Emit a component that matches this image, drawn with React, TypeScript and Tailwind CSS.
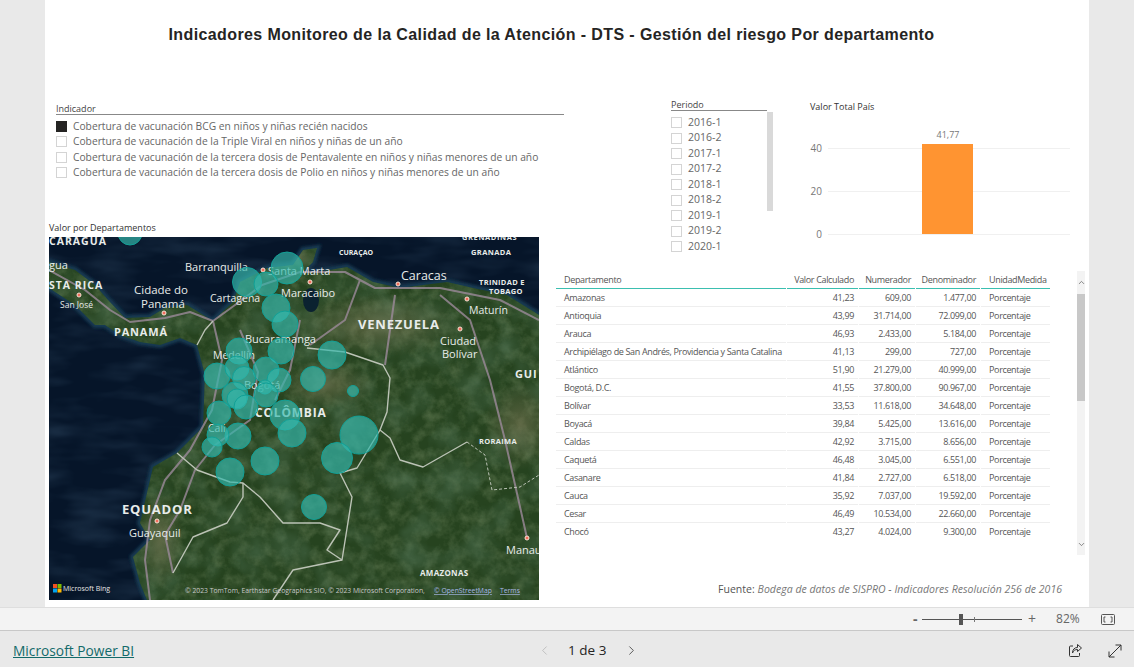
import { ChevronLeft, ChevronRight, ChevronUp, ChevronDown } from "lucide-react";

const indicadores = [
  "Cobertura de vacunación BCG en niños y niñas recién nacidos",
  "Cobertura de vacunación de la Triple Viral en niños y niñas de un año",
  "Cobertura de vacunación de la tercera dosis de Pentavalente en niños y niñas menores de un año",
  "Cobertura de vacunación de la tercera dosis de Polio en niños y niñas menores de un año",
];

const periodos = ["2016-1", "2016-2", "2017-1", "2017-2", "2018-1", "2018-2", "2019-1", "2019-2", "2020-1"];

const filas = [
  ["Amazonas", "41,23", "609,00", "1.477,00"],
  ["Antioquia", "43,99", "31.714,00", "72.099,00"],
  ["Arauca", "46,93", "2.433,00", "5.184,00"],
  ["Archipiélago de San Andrés, Providencia y Santa Catalina", "41,13", "299,00", "727,00"],
  ["Atlántico", "51,90", "21.279,00", "40.999,00"],
  ["Bogotá, D.C.", "41,55", "37.800,00", "90.967,00"],
  ["Bolívar", "33,53", "11.618,00", "34.648,00"],
  ["Boyacá", "39,84", "5.425,00", "13.616,00"],
  ["Caldas", "42,92", "3.715,00", "8.656,00"],
  ["Caquetá", "46,48", "3.045,00", "6.551,00"],
  ["Casanare", "41,84", "2.727,00", "6.518,00"],
  ["Cauca", "35,92", "7.037,00", "19.592,00"],
  ["Cesar", "46,49", "10.534,00", "22.660,00"],
  ["Chocó", "43,27", "4.024,00", "9.300,00"],
];

// x, y, r in page coordinates
const burbujas = [
  [130, 233, 12], [287, 268, 16], [247, 282, 14.5], [266, 284, 12], [276, 308, 14], [285, 324, 13],
  [281, 351, 13], [332, 355, 14], [239, 351, 13], [217, 376, 13], [237, 368, 12], [266, 370, 13],
  [244, 378, 11.5], [279, 380, 12], [313, 379, 12.5], [265, 387, 7], [353, 391, 5.5], [266, 395, 12],
  [235, 395, 13], [237, 399, 10], [246, 407, 12], [219, 413, 12], [285, 415, 15], [292, 433, 14],
  [359, 435, 19], [238, 436, 13], [218, 435, 11], [212, 447, 10], [337, 458, 15.5], [265, 461, 14],
  [230, 472, 14], [314, 507, 12.5],
];

const ciudades = [
  [263, 270], [398, 284], [79, 295], [164, 313], [310, 282], [467, 299], [460, 329], [157, 521], [527, 538],
];

const tierra =
  "M213 321 L233 302 L240 282 L267 268 L293 265 L303 250 L317 248 L313 262 L303 272 L318 272 L347 267 L373 282 L400 288 L447 282 L473 288 L507 295 L539 315 L539 600 L147 600 L140 583 L133 557 L150 540 L140 523 L147 493 L153 467 L177 453 L203 427 L205 375 L197 345 L180 338 L160 345 L140 342 L120 335 L105 325 L95 325 L75 305 L49 288 L49 262 L75 270 L95 285 L108 300 L125 318 L150 317 L165 308 L187 305 Z";

function MapaLabel({ x, y, size, bold, spacing, children }: { x: number; y: number; size: number; bold?: boolean; spacing?: number; children: string }) {
  return (
    <text x={x} y={y} fontSize={size} fontWeight={bold ? 700 : 400} letterSpacing={spacing ?? 0} fill="#e8ecea" fontFamily="'Open Sans', sans-serif">
      {children}
    </text>
  );
}

function Mapa() {
  return (
    <svg viewBox="49 237 490 363" className="block h-[363px] w-[490px]">
      <defs>
        <filter id="suave" x="-5%" y="-5%" width="110%" height="110%">
          <feGaussianBlur stdDeviation="1.6" />
        </filter>
        <filter id="ruido" x="0" y="0" width="100%" height="100%">
          <feTurbulence type="fractalNoise" baseFrequency="0.08" numOctaves="4" seed="7" />
          <feColorMatrix values="0 0 0 0 0.34  0 0 0 0 0.44  0 0 0 0 0.24  1.4 0 0 0 -0.55" />
        </filter>
        <filter id="oscuro" x="0" y="0" width="100%" height="100%">
          <feTurbulence type="fractalNoise" baseFrequency="0.03" numOctaves="3" seed="12" />
          <feColorMatrix values="0 0 0 0 0.08  0 0 0 0 0.17  0 0 0 0 0.09  2 0 0 0 -0.8" />
        </filter>
        <filter id="oleaje" x="0" y="0" width="100%" height="100%">
          <feTurbulence type="fractalNoise" baseFrequency="0.015 0.05" numOctaves="3" seed="3" />
          <feColorMatrix values="0 0 0 0 0.1  0 0 0 0 0.2  0 0 0 0 0.32  1.2 0 0 0 -0.5" />
        </filter>
        <clipPath id="costa">
          <path d={tierra} />
        </clipPath>
        <radialGradient id="seco" cx="0.5" cy="0.5" r="0.5">
          <stop offset="0" stopColor="#8b8260" stopOpacity="0.5" />
          <stop offset="1" stopColor="#8b8260" stopOpacity="0" />
        </radialGradient>
      </defs>

      <rect x="49" y="237" width="490" height="363" fill="#061529" />
      <rect x="49" y="237" width="490" height="363" filter="url(#oleaje)" opacity="0.4" />
      <path d={tierra} fill="#143a52" stroke="#143a52" strokeWidth="6" filter="url(#suave)" />

      <path d={tierra} fill="#26431f" />
      <g clipPath="url(#costa)">
        <rect x="49" y="237" width="490" height="363" filter="url(#ruido)" opacity="0.45" />
        <rect x="49" y="237" width="490" height="363" filter="url(#oscuro)" opacity="0.6" />
        <ellipse cx="375" cy="325" rx="85" ry="32" fill="url(#seco)" />
        <ellipse cx="325" cy="385" rx="50" ry="24" fill="url(#seco)" />
        <ellipse cx="520" cy="425" rx="36" ry="45" fill="url(#seco)" />
        <ellipse cx="295" cy="258" rx="22" ry="12" fill="url(#seco)" />
        <ellipse cx="160" cy="540" rx="24" ry="50" fill="url(#seco)" />
        {/* Lago de Maracaibo */}
        <ellipse cx="311" cy="300" rx="8" ry="12" fill="#0b2230" />
      </g>

      {/* carreteras */}
      <g fill="none" stroke="#9c8a9a" strokeWidth="2" strokeLinejoin="round" opacity="0.8">
        <path d="M49 270 L85 290 L110 310 L130 322 L165 318 L190 312 L213 321 L235 305 L262 285 L300 272 L345 272 L375 288 L440 288 L500 300 L539 320" />
        <path d="M213 321 L222 360 L212 410 L190 450 L165 480 L150 520 L145 560 L150 600" />
        <path d="M240 330 L258 372 L250 420 L215 445 L195 470 L180 510 L165 535 L173 573" />
        <path d="M300 320 L290 370 L275 400 M360 280 L345 320 L310 345 M395 295 L385 365 M440 295 L470 320 L490 380 L505 440 L527 538" />
      </g>

      {/* fronteras */}
      <g fill="none" stroke="#bcc3b6" strokeWidth="1.4" strokeLinejoin="round">
        <path d="M177 453 L197 470 L230 482 L243 483 L260 497 L283 523 L320 523 L340 530 L327 550 L342 560 L352 497 L340 473 L357 468 L380 430 L390 438 L400 460 L423 467 L467 442" />
        <path d="M342 560 L293 570 L273 600" />
        <path d="M243 483 L243 497 L227 523 L193 537 L173 573" />
        <path d="M307 348 L345 352 L383 365 L390 378 L387 412 L380 430" />
        <path d="M197 345 L205 330 L213 321" />
        <path d="M467 442 L485 455 L492 490 L520 487 L539 475" strokeDasharray="3 2" strokeWidth="1" />
      </g>

      {ciudades.map(([x, y]) => (
        <circle key={`${x}-${y}`} cx={x} cy={y} r="2" fill="#f26d5b" stroke="#f7e4d6" strokeWidth="1" />
      ))}

      <MapaLabel x={49} y={245} size={10.5} bold spacing={1}>CARAGUA</MapaLabel>
      <MapaLabel x={462} y={240} size={7.5} bold spacing={0.6}>GRENADINAS</MapaLabel>
      <MapaLabel x={339} y={255} size={7} bold>CURAÇAO</MapaLabel>
      <MapaLabel x={471} y={255} size={7.5} bold spacing={0.4}>GRANADA</MapaLabel>
      <MapaLabel x={185} y={271} size={11}>Barranquilla</MapaLabel>
      <MapaLabel x={268} y={275} size={11}>Santa Marta</MapaLabel>
      <MapaLabel x={401} y={280} size={12.5}>Caracas</MapaLabel>
      <MapaLabel x={479} y={285} size={7.5} bold spacing={0.3}>TRINIDAD E</MapaLabel>
      <MapaLabel x={489} y={294} size={7.5} bold spacing={0.3}>TOBAGO</MapaLabel>
      <MapaLabel x={49} y={269} size={11}>gua</MapaLabel>
      <MapaLabel x={49} y={289} size={10.5} bold spacing={1}>STA RICA</MapaLabel>
      <MapaLabel x={134} y={294} size={11.5}>Cidade do</MapaLabel>
      <MapaLabel x={141} y={308} size={11.5}>Panamá</MapaLabel>
      <MapaLabel x={60} y={308} size={8.5}>San José</MapaLabel>
      <MapaLabel x={281} y={297} size={11}>Maracaibo</MapaLabel>
      <MapaLabel x={210} y={302} size={10.5}>Cartagena</MapaLabel>
      <MapaLabel x={469} y={314} size={10.5}>Maturín</MapaLabel>
      <MapaLabel x={114} y={336} size={11} bold spacing={0.8}>PANAMÁ</MapaLabel>
      <MapaLabel x={358} y={329} size={13} bold spacing={0.8}>VENEZUELA</MapaLabel>
      <MapaLabel x={245} y={343} size={11}>Bucaramanga</MapaLabel>
      <MapaLabel x={440} y={345} size={11}>Ciudad</MapaLabel>
      <MapaLabel x={442} y={358} size={11}>Bolívar</MapaLabel>
      <MapaLabel x={213} y={359} size={10.5}>Medellín</MapaLabel>
      <MapaLabel x={515} y={378} size={11} bold spacing={0.8}>GUI</MapaLabel>
      <MapaLabel x={244} y={389} size={11}>Bogotá</MapaLabel>
      <MapaLabel x={255} y={417} size={12} bold spacing={0.8}>COLÔMBIA</MapaLabel>
      <MapaLabel x={208} y={432} size={10.5}>Cali</MapaLabel>
      <MapaLabel x={479} y={444} size={7.5} bold spacing={0.3}>RORAIMA</MapaLabel>
      <MapaLabel x={122} y={514} size={13} bold spacing={0.8}>EQUADOR</MapaLabel>
      <MapaLabel x={129} y={537} size={11}>Guayaquil</MapaLabel>
      <MapaLabel x={506} y={554} size={11}>Manaus</MapaLabel>
      <MapaLabel x={420} y={576} size={8} bold spacing={0.3}>AMAZONAS</MapaLabel>

      {burbujas.map(([x, y, r]) => (
        <circle key={`${x}-${y}`} cx={x} cy={y} r={r} fill="#35b8ac" fillOpacity="0.68" stroke="#12a096" strokeWidth="1" />
      ))}

      {/* logo Microsoft Bing */}
      <rect x="53" y="584" width="4" height="4" fill="#f25022" />
      <rect x="57.5" y="584" width="4" height="4" fill="#7fba00" />
      <rect x="53" y="588.5" width="4" height="4" fill="#00a4ef" />
      <rect x="57.5" y="588.5" width="4" height="4" fill="#ffb900" />
      <text x="63" y="591" fontSize="7" fill="#e6e6e6" fontFamily="'Open Sans', sans-serif">Microsoft Bing</text>
      <text x="185" y="593" fontSize="6.8" fill="#c9c9c9" fontFamily="'Open Sans', sans-serif">
        © 2023 TomTom, Earthstar Geographics SIO, © 2023 Microsoft Corporation,
      </text>
      <text x="434" y="593" fontSize="6.8" fill="#a9b9e8" textDecoration="underline" fontFamily="'Open Sans', sans-serif">© OpenStreetMap</text>
      <text x="500" y="593" fontSize="6.8" fill="#a9b9e8" textDecoration="underline" fontFamily="'Open Sans', sans-serif">Terms</text>
    </svg>
  );
}

function Grafico() {
  return (
    <svg viewBox="0 0 265 125" className="mt-[6px] block h-[125px] w-[265px] font-['Open_Sans',sans-serif]">
      <line x1="18" x2="260" y1="28.5" y2="28.5" stroke="#f0f0f0" />
      <line x1="18" x2="260" y1="71.5" y2="71.5" stroke="#f0f0f0" />
      <line x1="18" x2="260" y1="114.5" y2="114.5" stroke="#f0f0f0" />
      <rect x="112" y="24" width="51" height="90" fill="#ff9431" />
      <text x="138" y="18" fontSize="9" textAnchor="middle" fill="#777">41,77</text>
      <text x="12" y="32" fontSize="10" textAnchor="end" fill="#777">40</text>
      <text x="12" y="75" fontSize="10" textAnchor="end" fill="#777">20</text>
      <text x="12" y="118" fontSize="10" textAnchor="end" fill="#777">0</text>
    </svg>
  );
}

function Tabla() {
  const cols = "grid grid-cols-[230px_71px_56px_64px_69px] gap-x-px";
  const cabecera = "flex h-full items-center border-b border-[#3bbfb0] pt-px";
  return (
    <div className="w-[494px] text-[9px] tracking-[-0.35px] text-[#555]">
      <div className={`${cols} h-[18px]`}>
        <span className={`${cabecera} pl-2`}>Departamento</span>
        <span className={`${cabecera} justify-end pr-1`}>Valor Calculado</span>
        <span className={`${cabecera} justify-end pr-1`}>Numerador</span>
        <span className={`${cabecera} justify-end pr-1`}>Denominador</span>
        <span className={`${cabecera} pl-2`}>UnidadMedida</span>
      </div>
      {filas.map((fila, i) => {
        const celda = `flex h-full items-center ${i < filas.length - 1 ? "border-b border-[#eeeeee]" : ""}`;
        return (
          <div key={fila[0]} className={`${cols} h-[18px]`}>
            <span className={`${celda} whitespace-nowrap pl-2`}>{fila[0]}</span>
            <span className={`${celda} justify-end pr-1`}>{fila[1]}</span>
            <span className={`${celda} justify-end pr-1`}>{fila[2]}</span>
            <span className={`${celda} justify-end pr-1`}>{fila[3]}</span>
            <span className={`${celda} pl-2`}>Porcentaje</span>
          </div>
        );
      })}
    </div>
  );
}

export default function App() {
  return (
    <div className="flex h-[667px] w-[1134px] flex-col overflow-hidden bg-[#e9e9e9] font-['Open_Sans',sans-serif]">
      <div className="mx-[45px] flex h-[607px] w-[1044px] flex-col bg-white">
        <h1 className="flex h-[68px] items-center justify-center pr-[31px] pt-[2px] font-['Liberation_Sans',sans-serif] text-[16px] font-bold tracking-[0.39px] text-[#252423]">
          Indicadores Monitoreo de la Calidad de la Atención - DTS - Gestión del riesgo Por departamento
        </h1>

        <div className="flex">
          {/* columna izquierda */}
          <div className="w-[511px] pt-[33px]">
            <div className="ml-[11px] w-[508px]">
              <div className="h-[14px] border-b border-[#888] text-[9px] leading-[16px] text-[#444]">Indicador</div>
              <div className="mt-[4px]">
                {indicadores.map((texto, i) => (
                  <div key={texto} className="flex h-[15.33px] items-center gap-[6px] text-[10.25px] text-[#666]">
                    <span className={`h-[11px] w-[11px] ${i === 0 ? "bg-[#252423]" : "border border-[#d4d4d4]"}`} />
                    {texto}
                  </div>
                ))}
              </div>
            </div>
            <div className="ml-[4px] mt-[40px] h-[17px] text-[9px] leading-[15px] text-[#333]">Valor por Departamentos</div>
            <div className="ml-[4px]">
              <Mapa />
            </div>
          </div>

          {/* columna derecha */}
          <div className="w-[533px]">
            <div className="flex h-[203px]">
              <div className="ml-[115px] w-[102px] pt-[29px]">
                <div className="h-[14px] w-[96px] border-b border-[#888] text-[9px] leading-[16px] text-[#444]">Periodo</div>
                <div className="flex">
                  <div className="w-[96px] pt-[4px]">
                    {periodos.map((p) => (
                      <div key={p} className="flex h-[15.5px] items-center gap-[6px] text-[10.5px] text-[#666]">
                        <span className="h-[11px] w-[11px] border border-[#d4d4d4]" />
                        {p}
                      </div>
                    ))}
                  </div>
                  <div className="mt-[1px] h-[99px] w-[6px] bg-[#d9d9d9]" />
                </div>
              </div>
              <div className="ml-[37px] pt-[31px]">
                <div className="h-[15px] text-[9px] leading-[15px] text-[#333]">Valor Total País</div>
                <Grafico />
              </div>
            </div>

            <div className="flex">
              <Tabla />
              <div className="ml-[27px] flex h-[284px] w-[8px] flex-col items-center bg-[#f3f3f3]">
                <ChevronUp size={9} className="mt-[7px] text-[#666]" />
                <div className="mt-[7px] h-[107px] w-full bg-[#c8c8c8]" />
                <ChevronDown size={9} className="mt-auto mb-[6px] text-[#666]" />
              </div>
            </div>

            <div className="mt-[26px] pl-[162px] text-[10.5px] leading-[16px] tracking-[0.03px] text-[#777]">
              <span className="text-[#555]">Fuente:</span>{" "}
              <em>Bodega de datos de SISPRO - Indicadores Resolución 256 de 2016</em>
            </div>
          </div>
        </div>
      </div>

      {/* barra de zoom */}
      <div className="flex h-[23px] items-center border-t border-[#dedede] bg-[#f3f3f3] text-[#666]">
        <span className="ml-[913px] w-[9px] text-[14px] font-bold leading-none">-</span>
        <div className="relative h-[1px] w-[100px] bg-[#555]">
          <div className="absolute left-[37px] top-[-5px] h-[11px] w-[4px] bg-[#555]" />
          <div className="absolute left-[52px] top-[-2px] h-[5px] w-[1px] bg-[#777]" />
        </div>
        <span className="ml-[6px] text-[14px] leading-none">+</span>
        <span className="ml-[20px] text-[12px]">82%</span>
        <svg width="14" height="11" viewBox="0 0 14 11" fill="none" stroke="#555" className="ml-[21px]">
          <rect x="0.5" y="0.5" width="13" height="10" rx="1" />
          <path d="M4.5 3H3v5h1.5M9.5 3H11v5H9.5" />
        </svg>
      </div>

      {/* pie */}
      <div className="flex h-[37px] items-center border-t border-[#c8c8c8] bg-[#e9e9e9] pt-[3px]">
        <a href="#" className="ml-[13px] text-[13.75px] leading-none text-[#136a6a] underline">
          Microsoft Power BI
        </a>
        <ChevronLeft size={15} strokeWidth={1.25} className="ml-[403px] text-[#b5b5b5]" />
        <span className="ml-[16px] text-[13.5px] font-medium text-[#252423]">1 de 3</span>
        <ChevronRight size={15} strokeWidth={1.25} className="ml-[18px] text-[#333]" />
        <svg width="15" height="15" viewBox="0 0 15 15" fill="none" stroke="#333" className="ml-[429px]">
          <path d="M5 3H2.5a1 1 0 0 0-1 1v8.5a1 1 0 0 0 1 1h8a1 1 0 0 0 1-1V10" />
          <path d="M9.5 1.5 13.5 5 9.5 8.5V6.5C7 6.5 5.5 7.5 4.5 10c0-3.5 2-5.500 5-5.500Z" />
        </svg>
        <svg width="14" height="14" viewBox="0 0 14 14" fill="none" stroke="#333" className="ml-[25px]">
          <path d="M1 13 13 1M7.500 1H13V6.500M1 7.500V13H6.500" />
        </svg>
      </div>
    </div>
  );
}
